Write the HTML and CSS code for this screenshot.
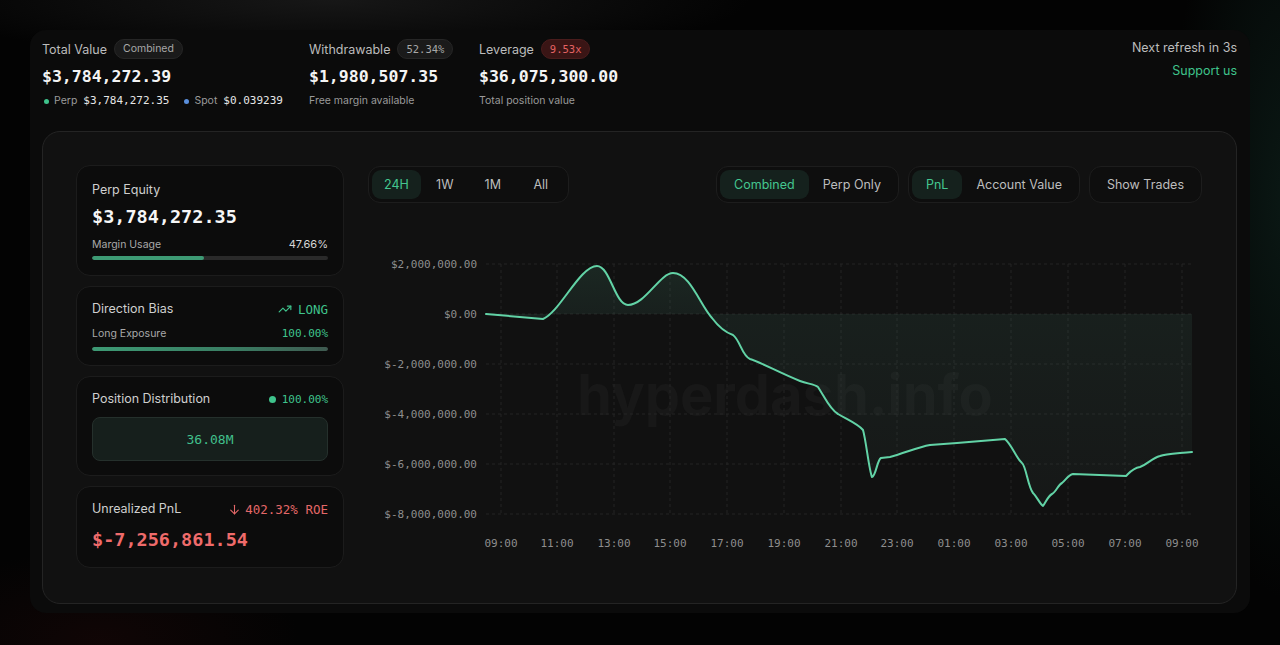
FILE: index.html
```html
<!DOCTYPE html>
<html lang="en">
<head>
    <meta charset="UTF-8">
    <meta name="viewport" content="width=device-width, initial-scale=1.0">
    <title>Portfolio Overview</title>
    <link rel="stylesheet" href="styles.css">
</head>
<body>
    <div class="panel">
        <header class="summary">
            <div class="stat stat-total">
                <div class="stat-label">Total Value <span class="pill">Combined</span></div>
                <div class="stat-value">$3,784,272.39</div>
                <div class="stat-sub">
                    <span class="dot dot-green"></span>Perp <b>$3,784,272.35</b>
                    <span class="dot dot-blue"></span>Spot <b>$0.039239</b>
                </div>
            </div>
            <div class="stat stat-withdraw">
                <div class="stat-label">Withdrawable <span class="pill mono">52.34%</span></div>
                <div class="stat-value">$1,980,507.35</div>
                <div class="stat-sub">Free margin available</div>
            </div>
            <div class="stat">
                <div class="stat-label">Leverage <span class="pill pill-red mono">9.53x</span></div>
                <div class="stat-value">$36,075,300.00</div>
                <div class="stat-sub">Total position value</div>
            </div>
            <div class="refresh">
                <div>Next refresh in 3s</div>
                <a class="support" href="#">Support us</a>
            </div>
        </header>

        <main class="board">
            <aside class="side">
                <section class="card card-equity">
                    <div class="card-label">Perp Equity</div>
                    <div class="card-value">$3,784,272.35</div>
                    <div class="card-row"><span>Margin Usage</span><span class="light">47.66%</span></div>
                    <div class="bar"><div class="bar-fill" style="width: 47.66%"></div></div>
                </section>

                <section class="card card-bias">
                    <div class="card-head">
                        <span class="card-label">Direction Bias</span>
                        <span class="tag-green mono">
                            <svg width="14" height="14" viewBox="0 0 24 24" fill="none" stroke="currentColor" stroke-width="2" stroke-linecap="round" stroke-linejoin="round"><polyline points="22 7 13.5 15.5 8.5 10.5 2 17"/><polyline points="16 7 22 7 22 13"/></svg>
                            LONG
                        </span>
                    </div>
                    <div class="card-row"><span>Long Exposure</span><span class="mono green">100.00%</span></div>
                    <div class="bar"><div class="bar-fill bar-full" style="width: 100%"></div></div>
                </section>

                <section class="card card-dist">
                    <div class="card-head">
                        <span class="card-label">Position Distribution</span>
                        <span class="mono green small"><span class="dot dot-big"></span>100.00%</span>
                    </div>
                    <div class="dist-box mono">36.08M</div>
                </section>

                <section class="card card-pnl">
                    <div class="card-head">
                        <span class="card-label">Unrealized PnL</span>
                        <span class="tag-red mono">
                            <svg width="13" height="13" viewBox="0 0 24 24" fill="none" stroke="currentColor" stroke-width="2" stroke-linecap="round" stroke-linejoin="round"><line x1="12" y1="4" x2="12" y2="20"/><polyline points="19 13 12 20 5 13"/></svg>
                            402.32% ROE
                        </span>
                    </div>
                    <div class="card-value card-value-red">$-7,256,861.54</div>
                </section>
            </aside>

            <section class="chart">
                <div class="toolbar">
                    <div class="group group-time">
                        <button class="btn active">24H</button>
                        <button class="btn">1W</button>
                        <button class="btn">1M</button>
                        <button class="btn">All</button>
                    </div>
                    <div class="toolbar-right">
                        <div class="group">
                            <button class="btn active">Combined</button>
                            <button class="btn">Perp Only</button>
                        </div>
                        <div class="group">
                            <button class="btn active">PnL</button>
                            <button class="btn">Account Value</button>
                        </div>
                        <div class="group">
                            <button class="btn">Show Trades</button>
                        </div>
                    </div>
                </div>

                <svg class="plot" width="834" height="365" viewBox="368 203 834 365">
                    <defs>
                        <linearGradient id="area" x1="0" y1="264" x2="0" y2="510" gradientUnits="userSpaceOnUse">
                            <stop offset="0" stop-color="#3f7a62" stop-opacity="0.22"/>
                            <stop offset="0.2" stop-color="#3f6e5e" stop-opacity="0.16"/>
                            <stop offset="1" stop-color="#3a4a46" stop-opacity="0.12"/>
                        </linearGradient>
                    </defs>

                    <text class="watermark" x="785" y="415" text-anchor="middle">hyperdash.info</text>

                    <g class="grid">
                        <line x1="486" y1="264" x2="1192" y2="264"/>
                        <line x1="486" y1="314" x2="1192" y2="314"/>
                        <line x1="486" y1="364" x2="1192" y2="364"/>
                        <line x1="486" y1="414" x2="1192" y2="414"/>
                        <line x1="486" y1="464" x2="1192" y2="464"/>
                        <line x1="486" y1="514" x2="1192" y2="514"/>
                        <line x1="501" y1="264" x2="501" y2="514"/>
                        <line x1="557" y1="264" x2="557" y2="514"/>
                        <line x1="614" y1="264" x2="614" y2="514"/>
                        <line x1="670" y1="264" x2="670" y2="514"/>
                        <line x1="727" y1="264" x2="727" y2="514"/>
                        <line x1="784" y1="264" x2="784" y2="514"/>
                        <line x1="841" y1="264" x2="841" y2="514"/>
                        <line x1="897" y1="264" x2="897" y2="514"/>
                        <line x1="954" y1="264" x2="954" y2="514"/>
                        <line x1="1011" y1="264" x2="1011" y2="514"/>
                        <line x1="1068" y1="264" x2="1068" y2="514"/>
                        <line x1="1125" y1="264" x2="1125" y2="514"/>
                        <line x1="1182" y1="264" x2="1182" y2="514"/>
                    </g>

                    <g class="axis" text-anchor="end">
                        <text x="477" y="268">$2,000,000.00</text>
                        <text x="477" y="318">$0.00</text>
                        <text x="477" y="368">$-2,000,000.00</text>
                        <text x="477" y="418">$-4,000,000.00</text>
                        <text x="477" y="468">$-6,000,000.00</text>
                        <text x="477" y="518">$-8,000,000.00</text>
                    </g>
                    <g class="axis" text-anchor="middle">
                        <text x="501" y="547">09:00</text>
                        <text x="557" y="547">11:00</text>
                        <text x="614" y="547">13:00</text>
                        <text x="670" y="547">15:00</text>
                        <text x="727" y="547">17:00</text>
                        <text x="784" y="547">19:00</text>
                        <text x="841" y="547">21:00</text>
                        <text x="897" y="547">23:00</text>
                        <text x="954" y="547">01:00</text>
                        <text x="1011" y="547">03:00</text>
                        <text x="1068" y="547">05:00</text>
                        <text x="1125" y="547">07:00</text>
                        <text x="1182" y="547">09:00</text>
                    </g>

                    <path class="area" d="M486,314 C510,316 530,318 543,319 C560,312 580,266 597,266 C610,266 615,305 628,305 C645,305 660,273 673,273 C690,273 700,305 712,318 C718,326 724,332 733,335 C740,340 742,356 750,359 C760,362 780,373 800,381 C808,384 814,384 818,387 C824,396 830,410 838,414 C848,420 858,424 863,430 C866,440 869,470 872,477 C876,476 877,460 881,458 L890,457 C905,453 918,447 930,445 L957,443 L1005,439 C1012,445 1016,458 1022,463 C1026,466 1028,487 1033,493 C1037,497 1040,504 1043,506 C1046,502 1048,496 1052,494 C1056,492 1058,485 1062,483 C1066,480 1068,475 1073,474 L1126,476 C1130,472 1133,468 1140,467 C1148,464 1152,458 1160,456 C1165,454 1170,454 1192,452 L1192,314 Z"/>
                    <path class="line" d="M486,314 C510,316 530,318 543,319 C560,312 580,266 597,266 C610,266 615,305 628,305 C645,305 660,273 673,273 C690,273 700,305 712,318 C718,326 724,332 733,335 C740,340 742,356 750,359 C760,362 780,373 800,381 C808,384 814,384 818,387 C824,396 830,410 838,414 C848,420 858,424 863,430 C866,440 869,470 872,477 C876,476 877,460 881,458 L890,457 C905,453 918,447 930,445 L957,443 L1005,439 C1012,445 1016,458 1022,463 C1026,466 1028,487 1033,493 C1037,497 1040,504 1043,506 C1046,502 1048,496 1052,494 C1056,492 1058,485 1062,483 C1066,480 1068,475 1073,474 L1126,476 C1130,472 1133,468 1140,467 C1148,464 1152,458 1160,456 C1165,454 1170,454 1192,452"/>
                </svg>
            </section>
        </main>
    </div>
</body>
</html>
```

FILE: styles.css
```css
* { box-sizing: border-box; margin: 0; padding: 0; }
body {
    width: 1280px; height: 645px; overflow: hidden;
    font-family: Inter, "Noto Sans", sans-serif; color: #e8e8e8;
    background:
        radial-gradient(ellipse 420px 60px at 330px 0, rgba(60, 60, 60, 0.35), transparent),
        radial-gradient(ellipse 120px 400px at 1290px 200px, rgba(20, 50, 42, 0.45), transparent),
        radial-gradient(ellipse 200px 90px at 100px 640px, rgba(40, 10, 10, 0.35), transparent),
        #030303;
}
.mono { font-family: "DejaVu Sans Mono", "Liberation Mono", monospace; }
.green { color: #3fc38c; }

.panel { margin: 30px 30px 0; height: 583px; padding: 0 13px 9px 12px; background: #0b0b0b; border-radius: 16px; display: flex; flex-direction: column; }

/* summary header */
.summary { flex: 0 0 101px; display: flex; padding-top: 9px; }
.stat-total { width: 267px; }
.stat-withdraw { width: 170px; }
.stat-label { display: flex; align-items: center; gap: 7px; height: 20px; font-size: 12.5px; color: #bcbcbc; }
.pill { font-size: 10.5px; padding: 0 8px; height: 20px; line-height: 18px; border-radius: 10px; background: #1a1a1a; border: 1px solid #262626; color: #a8a8a8; }
.pill-red { background: #3a1515; border-color: #4a1c1c; color: #e46363; }
.stat-value { margin-top: 7px; height: 22px; line-height: 22px; font-family: "DejaVu Sans Mono", monospace; font-weight: 700; font-size: 16.5px; color: #f4f4f4; }
.stat-sub { margin-top: 5px; height: 16px; line-height: 16px; font-size: 10.5px; color: #9a9a9a; display: flex; align-items: center; }
.stat-sub b { font-family: "DejaVu Sans Mono", monospace; font-weight: 400; font-size: 11px; color: #e6e6e6; margin: 0 13px 0 6px; }
.dot { display: inline-block; width: 5px; height: 5px; border-radius: 50%; margin: 0 5px 0 2px; }
.dot-green { background: #3fc38c; }
.dot-blue { background: #5a8fdc; }
.dot-big { width: 7px; height: 7px; background: #3fc38c; margin: 0 6px 1px 0; vertical-align: middle; }
.refresh { margin-left: auto; text-align: right; font-size: 12.5px; line-height: 18px; color: #bcbcbc; }
.support { display: block; margin-top: 5px; color: #3fc38c; text-decoration: none; }

/* board */
.board { flex: 1; display: flex; gap: 24px; padding: 33px 34px 34px 33px; background: #111; border: 1px solid #242424; border-radius: 18px; }
.side { width: 268px; display: flex; flex-direction: column; gap: 10px; }
.card { background: #0c0c0c; border: 1px solid #1c1c1c; border-radius: 14px; padding: 14px 15px; }
.card-equity { padding-top: 16px; padding-bottom: 15px; }
.card-pnl { padding-bottom: 15px; }
.card-label { font-size: 12.5px; line-height: 16px; color: #cfcfcf; }
.card-head { display: flex; justify-content: space-between; align-items: center; height: 16px; }
.card-value { margin-top: 7px; height: 24px; line-height: 24px; font-family: "DejaVu Sans Mono", monospace; font-weight: 700; font-size: 18.5px; color: #f6f6f6; }
.card-pnl .card-value { margin-top: 11px; }
.card-value-red { color: #ef6b6b; }
.card-row { display: flex; justify-content: space-between; align-items: center; margin-top: 8px; height: 14px; font-size: 10.5px; color: #a9a9a9; }
.card-bias .card-row { margin-top: 9px; }
.card-row .light { color: #d6d6d6; font-size: 11px; }
.card-row .mono { font-size: 11px; }
.bar { margin-top: 5px; height: 4px; border-radius: 2px; background: #2a2a2a; overflow: hidden; }
.card-bias .bar { margin-top: 7px; }
.bar-fill { height: 100%; background: #3d9a74; border-radius: 2px; }
.bar-full { background: linear-gradient(90deg, #3d9a74, #3a7d63 60%, #3f5a50); }
.tag-green { display: flex; align-items: center; gap: 6px; font-size: 12.5px; color: #3fc38c; }
.tag-red { display: flex; align-items: center; gap: 4px; font-size: 12.5px; color: #e46868; }
.small { font-size: 11px; }
.dist-box { margin-top: 10px; height: 44px; display: flex; align-items: center; justify-content: center; background: #161f1c; border: 1px solid #25302c; border-radius: 8px; color: #41c08c; font-size: 13px; }

/* chart */
.chart { flex: 1; display: flex; flex-direction: column; }
.toolbar { display: flex; justify-content: space-between; margin-top: 1px; height: 37px; }
.toolbar-right { display: flex; gap: 9px; }
.group { display: flex; padding: 3px; height: 37px; background: #0e0e0e; border: 1px solid #1d1d1d; border-radius: 12px; }
.btn { height: 29px; padding: 0 14px; border: none; border-radius: 9px; background: none; color: #bdbdbd; font-family: Inter, sans-serif; font-size: 12.5px; cursor: pointer; }
.group-time .btn { min-width: 48px; padding: 0 12px; }
.btn.active { background: #15211d; color: #44c690; }
.plot { display: block; }
.watermark { font-family: Inter, sans-serif; font-weight: 700; font-size: 56px; fill: #181818; }
.grid line { stroke: #252525; stroke-width: 1; stroke-dasharray: 3 3; }
.axis text { font-family: "DejaVu Sans Mono", monospace; font-size: 11px; fill: #8e8e8e; }
.area { fill: url(#area); }
.line { fill: none; stroke: #62d3a6; stroke-width: 2; stroke-linejoin: round; stroke-linecap: round; }
```
